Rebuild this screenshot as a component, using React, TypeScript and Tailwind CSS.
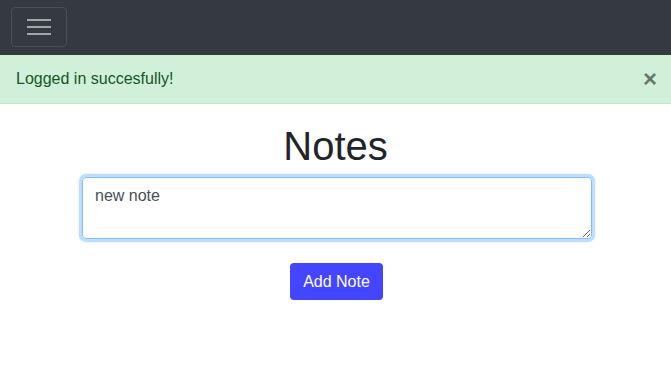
import React from "react";

export default function App() {
  return (
    <div className="min-h-screen bg-white text-[#212529]" style={{ fontFamily: '"Liberation Sans", Arial, sans-serif' }}>
      <nav className="h-[55px] bg-[#343a40] pl-[11px] pt-[7px]">
        <button className="w-[56px] h-[40px] border border-[rgba(255,255,255,0.1)] rounded-[4px] flex flex-col items-center justify-center gap-[5px]">
          <span className="block w-[24px] h-[2px] bg-[rgba(255,255,255,0.55)]" />
          <span className="block w-[24px] h-[2px] bg-[rgba(255,255,255,0.55)]" />
          <span className="block w-[24px] h-[2px] bg-[rgba(255,255,255,0.55)]" />
        </button>
      </nav>
      <div className="h-[49px] bg-[#d0f0da] border-b border-[#c3e6cb] text-[#155724] flex items-center justify-between pl-[16px] pr-[14px] text-[16px] leading-[24px]">
        <span>Logged in succesfully!</span>
        <span className="text-[24px] font-bold leading-none text-black opacity-50">×</span>
      </div>
      <h1 className="text-center text-[40px] leading-[48px] font-normal mt-[18px]">Notes</h1>
      <div className="ml-[82px] w-[510px] mt-[7px]">
        <textarea
          defaultValue="new note"
          className="block w-full h-[62px] border border-[#80bdff] rounded-[4px] px-[12px] py-[6px] text-[16px] leading-[24px] text-[#495057] outline-none shadow-[0_0_0_3.2px_rgba(0,123,255,0.25)] resize-y"
          style={{ fontFamily: '"Liberation Sans", Arial, sans-serif' }}
        />
      </div>
      <div className="flex justify-center mt-[24px] pl-[2px]">
        <button className="h-[37px] px-[13px] bg-[#4445ff] text-white rounded-[4px] text-[16px] leading-[24px]">Add Note</button>
      </div>
    </div>
  );
}
